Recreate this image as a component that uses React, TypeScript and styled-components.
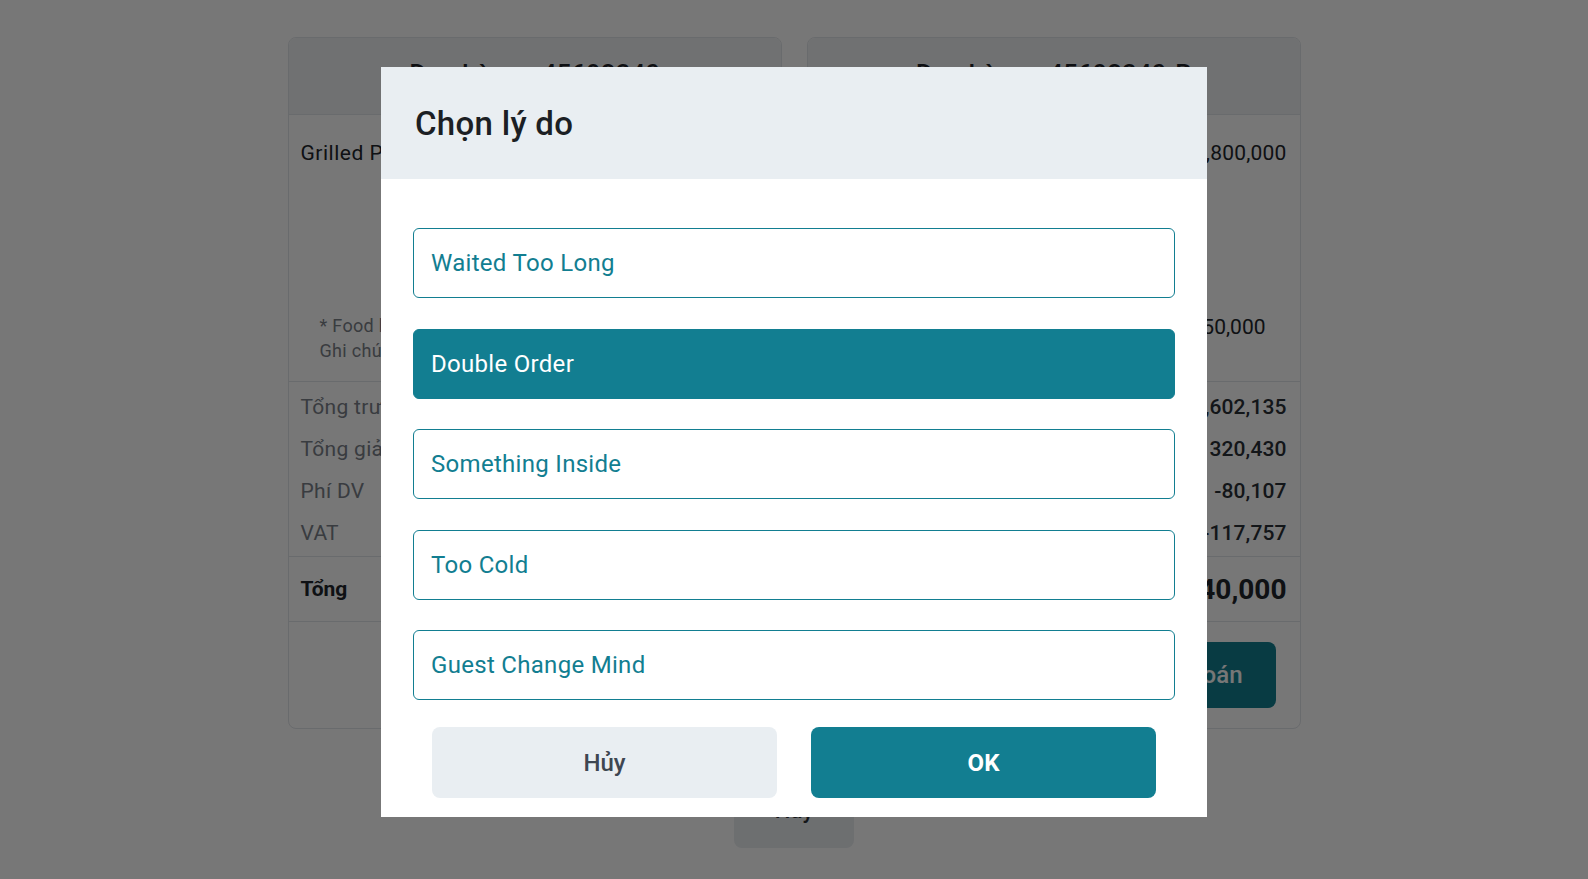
import React, { useState } from "react";
import styled, { createGlobalStyle } from "styled-components";

const GlobalStyle = createGlobalStyle`
  * { box-sizing: border-box; }
  body {
    margin: 0;
    background: #ffffff;
    font-family: Roboto, "Liberation Sans", Arial, sans-serif;
  }
`;

const TEAL = "#127e91";
const LINE = "#e2e5e9";

interface OrderProps {
  code: string;
  item: string;
  itemPrice: string;
  noteFood: string;
  noteText: string;
  notePrice: string;
  summary: { label: string; value: string }[];
  total: string;
}

const Page = styled.div`
  display: flex;
  flex-direction: column;
  align-items: center;
  padding-top: 37px;
  min-height: 879px;
`;

const CardsRow = styled.div`
  display: flex;
  gap: 25px;
`;

const Card = styled.div`
  width: 494px;
  border: 1px solid ${LINE};
  border-radius: 8px;
  display: flex;
  flex-direction: column;
  overflow: hidden;
`;

const CardHeader = styled.div`
  height: 77px;
  padding: 19px 16px 0;
  background: #f1f3f5;
  border-bottom: 1px solid ${LINE};
  text-align: center;
  font-size: 26px;
  line-height: 34px;
  font-weight: 500;
  color: #1f2329;
`;

const Items = styled.div`
  height: 266px;
  padding: 24px 13px 0 12px;
`;

const ItemRow = styled.div`
  display: flex;
  justify-content: space-between;
  font-size: 21px;
  line-height: 28px;
  letter-spacing: 0.5px;
  color: #22262b;

  span:last-child {
    letter-spacing: 0.2px;
  }
`;

const NoteBlock = styled.div`
  margin-top: 146px;
  padding: 0 21px 0 19px;
  display: flex;
  justify-content: space-between;
  align-items: flex-start;
`;

const NoteLines = styled.div`
  font-size: 18px;
  line-height: 25px;
  letter-spacing: 0.3px;
  color: #7b8088;
`;

const NotePrice = styled.span`
  font-size: 21px;
  line-height: 28px;
  color: #22262b;
`;

const Summary = styled.div`
  border-top: 1px solid ${LINE};
  padding: 4px 13px 2px 12px;
`;

const SummaryRow = styled.div`
  height: 42px;
  display: flex;
  align-items: center;
  justify-content: space-between;
  font-size: 21px;
  letter-spacing: 0.3px;
  color: #7a8089;

  span:last-child {
    color: #2a2f36;
    font-weight: 500;
    letter-spacing: 0.1px;
  }
`;

const TotalRow = styled.div`
  border-top: 1px solid ${LINE};
  height: 65px;
  padding: 0 13px 0 12px;
  display: flex;
  align-items: center;
  justify-content: space-between;
  font-weight: 700;
  color: #22262b;
  font-size: 21px;

  span:last-child {
    font-size: 28px;
  }
`;

const Actions = styled.div`
  border-top: 1px solid ${LINE};
  padding: 20px 24px 20px;
  display: flex;
  justify-content: flex-end;
`;

const PayButton = styled.button`
  height: 66px;
  padding: 0 33px;
  border: none;
  border-radius: 8px;
  background: ${TEAL};
  color: #ffffff;
  font-family: inherit;
  font-size: 24px;
  font-weight: 500;
`;

const BackButton = styled.button`
  margin-top: 43px;
  width: 120px;
  height: 76px;
  border: none;
  border-radius: 8px;
  background: #e9edf1;
  color: #2b2f36;
  font-family: inherit;
  font-size: 22px;
  font-weight: 500;
`;

/* dialog */
const Overlay = styled.div`
  position: fixed;
  inset: 0;
  background: rgba(0, 0, 0, 0.533);
  display: flex;
  justify-content: center;
  align-items: flex-start;
  padding-top: 67px;
`;

const Modal = styled.div`
  width: 826px;
  height: 750px;
  background: #ffffff;
  display: flex;
  flex-direction: column;
`;

const ModalHeader = styled.div`
  height: 112px;
  flex-shrink: 0;
  padding: 0 34px;
  display: flex;
  align-items: center;
  background: #e9eef2;
  font-size: 33px;
  font-weight: 500;
  letter-spacing: 0.3px;
  color: #1c1f24;
`;

const Options = styled.div`
  padding: 49px 32px 0;
  display: flex;
  flex-direction: column;
  gap: 30.5px;
`;

const Option = styled.button<{ $active: boolean }>`
  height: 70px;
  padding: 0 17px;
  display: flex;
  align-items: center;
  border: 1.5px solid ${TEAL};
  border-radius: 6px;
  background: ${(p) => (p.$active ? TEAL : "#ffffff")};
  color: ${(p) => (p.$active ? "#ffffff" : TEAL)};
  font-family: inherit;
  font-size: 24px;
  letter-spacing: 0.3px;
  text-align: left;
  cursor: pointer;
`;

const Footer = styled.div`
  padding: 27px 51px 0;
  display: grid;
  grid-template-columns: 1fr 1fr;
  gap: 34px;
`;

const FooterButton = styled.button<{ $primary?: boolean }>`
  height: 71px;
  border: none;
  border-radius: 8px;
  background: ${(p) => (p.$primary ? TEAL : "#e9eef2")};
  color: ${(p) => (p.$primary ? "#ffffff" : "#3e4651")};
  font-family: inherit;
  font-size: 24px;
  font-weight: ${(p) => (p.$primary ? 700 : 500)};
`;

const reasons = [
  "Waited Too Long",
  "Double Order",
  "Something Inside",
  "Too Cold",
  "Guest Change Mind",
];

const summaryRows = [
  { label: "Tổng trước thuế", value: "1,602,135" },
  { label: "Tổng giảm giá", value: "320,430" },
  { label: "Phí DV", value: "-80,107" },
  { label: "VAT", value: "-117,757" },
];

const orders: OrderProps[] = [
  {
    code: "Đơn hàng - 45692340",
    item: "Grilled Pork Ribs",
    itemPrice: "1,800,000",
    noteFood: "* Food không hành",
    noteText: "Ghi chú: ít cay",
    notePrice: "150,000",
    summary: summaryRows,
    total: "1,240,000",
  },
  {
    code: "Đơn hàng - 45692340-R",
    item: "Grilled Pork Ribs",
    itemPrice: "1,800,000",
    noteFood: "* Food không hành",
    noteText: "Ghi chú: ít cay",
    notePrice: "150,000",
    summary: summaryRows,
    total: "1,240,000",
  },
];

function OrderCard(order: OrderProps) {
  return (
    <Card>
      <CardHeader>{order.code}</CardHeader>
      <Items>
        <ItemRow>
          <span>{order.item}</span>
          <span>{order.itemPrice}</span>
        </ItemRow>
        <NoteBlock>
          <NoteLines>
            <div>{order.noteFood}</div>
            <div>{order.noteText}</div>
          </NoteLines>
          <NotePrice>{order.notePrice}</NotePrice>
        </NoteBlock>
      </Items>
      <Summary>
        {order.summary.map((row) => (
          <SummaryRow key={row.label}>
            <span>{row.label}</span>
            <span>{row.value}</span>
          </SummaryRow>
        ))}
      </Summary>
      <TotalRow>
        <span>Tổng</span>
        <span>{order.total}</span>
      </TotalRow>
      <Actions>
        <PayButton>Thanh toán</PayButton>
      </Actions>
    </Card>
  );
}

export default function App() {
  const [selected, setSelected] = useState(1);

  return (
    <>
      <GlobalStyle />
      <Page>
        <CardsRow>
          {orders.map((o) => (
            <OrderCard key={o.code} {...o} />
          ))}
        </CardsRow>
        <BackButton>Hủy</BackButton>
      </Page>
      <Overlay>
        <Modal>
          <ModalHeader>Chọn lý do</ModalHeader>
          <Options>
            {reasons.map((r, i) => (
              <Option key={r} $active={i === selected} onClick={() => setSelected(i)}>
                {r}
              </Option>
            ))}
          </Options>
          <Footer>
            <FooterButton>Hủy</FooterButton>
            <FooterButton $primary>OK</FooterButton>
          </Footer>
        </Modal>
      </Overlay>
    </>
  );
}
